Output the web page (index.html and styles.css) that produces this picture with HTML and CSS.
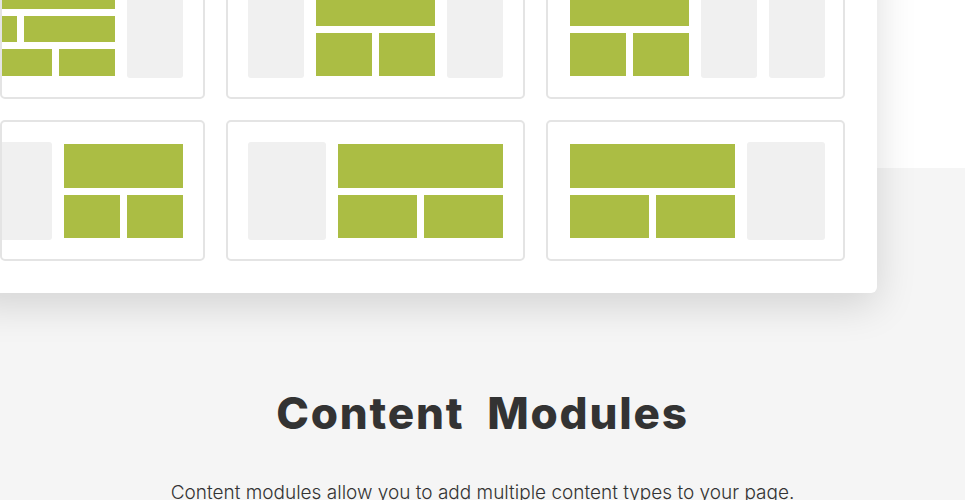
FILE: index.html
```html
<!DOCTYPE html>
<html lang="en">
<head>
    <meta charset="UTF-8">
    <meta name="viewport" content="width=device-width, initial-scale=1.0">
    <title>Content Modules</title>
    <link rel="stylesheet" href="styles.css">
</head>
<body>
    <div class="page">
        <div class="layouts-card">
            <div class="layouts-grid">
                <!-- row 1 -->
                <div class="layout clipped">
                    <div class="layout-inner">
                        <div class="side narrow"></div>
                        <div class="blocks">
                            <div class="block-row"><div class="block"></div></div>
                            <div class="block-row"><div class="block tiny"></div><div class="block"></div></div>
                            <div class="block-row"><div class="block"></div><div class="block"></div></div>
                        </div>
                        <div class="side narrow"></div>
                    </div>
                </div>
                <div class="layout">
                    <div class="layout-inner">
                        <div class="side narrow"></div>
                        <div class="blocks">
                            <div class="block-row"><div class="block"></div></div>
                            <div class="block-row"><div class="block"></div><div class="block"></div></div>
                        </div>
                        <div class="side narrow"></div>
                    </div>
                </div>
                <div class="layout">
                    <div class="layout-inner">
                        <div class="blocks">
                            <div class="block-row"><div class="block"></div></div>
                            <div class="block-row"><div class="block"></div><div class="block"></div></div>
                        </div>
                        <div class="side narrow"></div>
                        <div class="side narrow"></div>
                    </div>
                </div>

                <!-- row 2 -->
                <div class="layout clipped">
                    <div class="layout-inner">
                        <div class="side fill"></div>
                        <div class="blocks">
                            <div class="block-row"><div class="block"></div></div>
                            <div class="block-row"><div class="block"></div><div class="block"></div></div>
                        </div>
                    </div>
                </div>
                <div class="layout">
                    <div class="layout-inner">
                        <div class="side wide"></div>
                        <div class="blocks wide">
                            <div class="block-row"><div class="block"></div></div>
                            <div class="block-row"><div class="block"></div><div class="block"></div></div>
                        </div>
                    </div>
                </div>
                <div class="layout">
                    <div class="layout-inner">
                        <div class="blocks wide">
                            <div class="block-row"><div class="block"></div></div>
                            <div class="block-row"><div class="block"></div><div class="block"></div></div>
                        </div>
                        <div class="side wide"></div>
                    </div>
                </div>
            </div>
        </div>

        <section class="intro">
            <h2>Content&nbsp; Modules</h2>
            <p>Content modules allow you to add multiple content types to your page.</p>
        </section>
    </div>
</body>
</html>
```

FILE: styles.css
```css
body {
    margin: 0;
    font-family: Inter, 'Noto Sans', sans-serif;
    color: #333;
    overflow: hidden;
}

.page {
    display: flow-root; /* keep the card's negative margin inside */
    min-height: 100vh;
    /* white header band, light grey below */
    background: linear-gradient(#fff 168px, #f5f5f5 168px);
}

.layouts-card {
    width: 845px;
    margin: -74px 0 0 -32px;
    padding: 32px;
    background-color: #fff;
    border-radius: 6px;
    box-shadow: 0 12px 40px rgba(0,0,0,0.14);
}

.layouts-grid {
    display: grid;
    grid-template-columns: 205px 299px 299px;
    gap: 21px;
}

.layout {
    display: flex;
    justify-content: flex-start;
    padding: 20px 20px 19px;
    border: 2px solid #e4e4e4;
    border-radius: 5px;
    box-sizing: border-box;
    height: 141px;
}

.layout:nth-child(3n) {
    padding-left: 22px;
    padding-right: 18px;
}

/* first column is narrower, its preview slides off to the left */
.layout.clipped {
    justify-content: flex-end;
    overflow: hidden;
    padding-left: 0;
    padding-right: 20px;
}

.layout-inner {
    display: flex;
    gap: 12px;
    width: 255px;
    flex-shrink: 0;
}

.side {
    height: 98px;
    background-color: #f0f0f0;
    border-radius: 3px;
}
.side.narrow { width: 56px; }
.side.wide { width: 78px; }
.side.fill { flex: 1; }

.blocks {
    display: flex;
    flex-direction: column;
    gap: 7px;
    width: 119px;
    padding: 2px 0;
    box-sizing: border-box;
    height: 98px;
}
.blocks.wide { width: 165px; }

.block-row {
    display: flex;
    gap: 7px;
    flex: 1;
}

.block {
    flex: 1;
    background-color: #abbd44;
}
.block.tiny { flex: 0 0 21px; }

.intro {
    text-align: center;
    padding-top: 93px;
}

.intro h2 {
    margin: 0;
    font-size: 44px;
    font-weight: 800;
    letter-spacing: 1.8px;
    line-height: 54px;
    color: #333;
}

.intro p {
    margin: 41px 0 0;
    font-size: 19px;
    font-weight: 300;
    color: #333;
}
```
